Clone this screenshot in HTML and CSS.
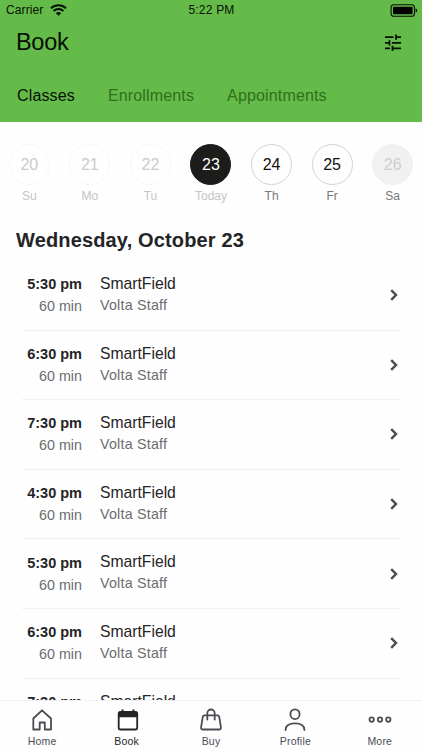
FILE: index.html
```html
<!DOCTYPE html>
<html lang="en">
<head>
<meta charset="utf-8">
<meta name="viewport" content="width=device-width, initial-scale=1">
<title>Book</title>
<link rel="stylesheet" href="styles.css">
</head>
<body>
<div class="app">
    <header class="header">
        <div class="status-bar">
            <div class="carrier">
                <span>Carrier</span>
                <svg class="wifi" viewBox="0 0 17 12" width="17" height="12">
                    <path d="M1 4.3a10.8 10.8 0 0 1 15 0M3.6 7a7 7 0 0 1 9.8 0" fill="none" stroke="#061004" stroke-width="1.9"/>
                    <path d="M8.5 11.8L5.9 9.2a3.8 3.8 0 0 1 5.2 0z" fill="#061004"/>
                </svg>
            </div>
            <span class="clock">5:22 PM</span>
            <svg class="battery" viewBox="0 0 28 13" width="28" height="13">
                <rect x="1.1" y=".8" width="23.4" height="11.4" rx="2.8" fill="none" stroke="#061004" stroke-width="1.1"/>
                <rect x="3" y="2.7" width="19.6" height="7.6" rx=".8" fill="#000"/>
                <path d="M25.6 4.5c1.2.3 1.6 1.1 1.6 2s-.4 1.7-1.6 2z" fill="#061004"/>
            </svg>
        </div>
        <div class="title-bar">
            <h1>Book</h1>
            <svg class="filter" viewBox="0 0 18 18" width="18" height="18">
                <path d="M1 3.2h8.5M12 3.2h5M12 .6v5.2M1 8.8h4.5M8 8.8h9M5.5 6.2v5.2M1 14.3h5M8.5 14.3H17M8.5 11.7v5.2" fill="none" stroke="#061004" stroke-width="1.8"/>
            </svg>
        </div>
        <nav class="tabs">
            <a class="tab active">Classes</a>
            <a class="tab">Enrollments</a>
            <a class="tab">Appointments</a>
        </nav>
    </header>

    <section class="week">
        <div class="day past"><span class="num">20</span><span class="name">Su</span></div>
        <div class="day past"><span class="num">21</span><span class="name">Mo</span></div>
        <div class="day past"><span class="num">22</span><span class="name">Tu</span></div>
        <div class="day today"><span class="num">23</span><span class="name">Today</span></div>
        <div class="day"><span class="num">24</span><span class="name">Th</span></div>
        <div class="day"><span class="num">25</span><span class="name">Fr</span></div>
        <div class="day closed"><span class="num">26</span><span class="name">Sa</span></div>
    </section>

    <main class="schedule">
        <h2>Wednesday, October 23</h2>
        <div class="class-list">
            <div class="class-row">
                <div class="time"><b>5:30 pm</b><span>60 min</span></div>
                <div class="info"><p>SmartField</p><span>Volta Staff</span></div>
                <svg class="arrow" viewBox="0 0 8 12" width="8" height="12"><path d="M1.2 1.2L6 6l-4.8 4.8"/></svg>
            </div>
            <div class="class-row">
                <div class="time"><b>6:30 pm</b><span>60 min</span></div>
                <div class="info"><p>SmartField</p><span>Volta Staff</span></div>
                <svg class="arrow" viewBox="0 0 8 12" width="8" height="12"><path d="M1.2 1.2L6 6l-4.8 4.8"/></svg>
            </div>
            <div class="class-row">
                <div class="time"><b>7:30 pm</b><span>60 min</span></div>
                <div class="info"><p>SmartField</p><span>Volta Staff</span></div>
                <svg class="arrow" viewBox="0 0 8 12" width="8" height="12"><path d="M1.2 1.2L6 6l-4.8 4.8"/></svg>
            </div>
            <div class="class-row">
                <div class="time"><b>4:30 pm</b><span>60 min</span></div>
                <div class="info"><p>SmartField</p><span>Volta Staff</span></div>
                <svg class="arrow" viewBox="0 0 8 12" width="8" height="12"><path d="M1.2 1.2L6 6l-4.8 4.8"/></svg>
            </div>
            <div class="class-row">
                <div class="time"><b>5:30 pm</b><span>60 min</span></div>
                <div class="info"><p>SmartField</p><span>Volta Staff</span></div>
                <svg class="arrow" viewBox="0 0 8 12" width="8" height="12"><path d="M1.2 1.2L6 6l-4.8 4.8"/></svg>
            </div>
            <div class="class-row">
                <div class="time"><b>6:30 pm</b><span>60 min</span></div>
                <div class="info"><p>SmartField</p><span>Volta Staff</span></div>
                <svg class="arrow" viewBox="0 0 8 12" width="8" height="12"><path d="M1.2 1.2L6 6l-4.8 4.8"/></svg>
            </div>
            <div class="class-row">
                <div class="time"><b>7:30 pm</b><span>60 min</span></div>
                <div class="info"><p>SmartField</p><span>Volta Staff</span></div>
                <svg class="arrow" viewBox="0 0 8 12" width="8" height="12"><path d="M1.2 1.2L6 6l-4.8 4.8"/></svg>
            </div>
        </div>
    </main>

    <nav class="bottom-nav">
        <a class="nav-item">
            <svg viewBox="0 0 24 24" width="24" height="24"><path d="M3.3 10.5L12 2.3l9 8.2V21.5H14.8V14.5H9.7V21.5H3.3z"/></svg>
            <span>Home</span>
        </a>
        <a class="nav-item active">
            <svg viewBox="0 0 24 24" width="24" height="24">
                <rect x="3.7" y="3.8" width="18.5" height="17.7" rx="1.8"/>
                <path class="solid" d="M3.7 3.8h18.5v5.4H3.7zM6.6 1.5h2v3h-2zM17.4 1.5h2v3h-2z"/>
            </svg>
            <span>Book</span>
        </a>
        <a class="nav-item">
            <svg viewBox="0 0 24 24" width="24" height="24"><path d="M5.5 7.3h13q1.5 0 1.7 1.5l1.7 10.4q.3 2.3-2 2.3H4.1q-2.3 0-2-2.3L3.8 8.8q.2-1.5 1.7-1.5zM8.3 11.5V5.2a3.7 3.7 0 0 1 7.4 0V11.5"/></svg>
            <span>Buy</span>
        </a>
        <a class="nav-item">
            <svg viewBox="0 0 24 24" width="24" height="24"><ellipse cx="12" cy="6.2" rx="4.6" ry="4.9"/><path d="M2.6 22c0-4.2 3.5-6.6 9.4-6.6s9.4 2.4 9.4 6.6"/></svg>
            <span>Profile</span>
        </a>
        <a class="nav-item">
            <svg class="dots" viewBox="0 0 24 24" width="24" height="24"><circle cx="3.7" cy="11.6" r="2.2"/><circle cx="12" cy="11.6" r="2.2"/><circle cx="20.3" cy="11.6" r="2.2"/></svg>
            <span>More</span>
        </a>
    </nav>
</div>
</body>
</html>
```
FILE: styles.css
```css
* {
    box-sizing: border-box;
}

body {
    margin: 0;
    background: #fefefe;
    color: #242426;
    font-family: "Liberation Sans", Arial, sans-serif;
}

h1, h2, p {
    margin: 0;
}

.app {
    display: flex;
    flex-direction: column;
    height: 750px;
    overflow: hidden;
}

/* Header */
.header {
    flex: none;
    height: 122px;
    background: #65bb49;
    color: #061004;
}

.status-bar {
    display: grid;
    grid-template-columns: 1fr auto 1fr;
    align-items: center;
    height: 20px;
    padding: 0 4px 0 6px;
    font-size: 12px;
}

.carrier {
    display: flex;
    align-items: center;
    gap: 7px;
}

.carrier span {
    letter-spacing: 0.1px;
}

.clock {
    margin-right: 1px;
    letter-spacing: 0.2px;
}

.battery {
    justify-self: end;
}

.title-bar {
    display: flex;
    justify-content: space-between;
    align-items: center;
    height: 45px;
    padding: 0 20px 0 16px;
}

h1 {
    font-size: 23.5px;
    font-weight: normal;
    letter-spacing: -0.3px;
}

.tabs {
    display: flex;
    gap: 33px;
    padding: 21px 16px 0 17px;
    font-size: 16px;
    line-height: 20px;
    letter-spacing: 0.15px;
}

.tab {
    color: #2f7019;
}

.tab.active {
    color: #061004;
}

/* Week strip */
.week {
    flex: none;
    display: grid;
    grid-template-columns: repeat(7, 1fr);
    height: 97px;
    margin: 0 -1px;
    padding-top: 22px;
}

.day {
    display: flex;
    flex-direction: column;
    align-items: center;
}

.num {
    width: 41px;
    height: 41px;
    border: 1px solid #d4d4d4;
    border-radius: 50%;
    color: #111;
    font-size: 16px;
    line-height: 40px;
    text-align: center;
}

.name {
    margin-top: 3px;
    color: #77777a;
    font-size: 12px;
    line-height: 16px;
}

.past .num {
    border-color: #f7f7f7;
    color: #cbcbcb;
}

.past .name,
.today .name {
    color: #c5c5c5;
}

.today .num {
    border-color: #1c1c1a;
    background: #1c1c1a;
    color: #fff;
}

.closed .num {
    border-color: #f1f1f1;
    background: #f1f1f1;
    color: #cecece;
}

/* Schedule */
.schedule {
    flex: 1;
    min-height: 0;
    overflow: hidden;
}

h2 {
    padding-left: 16px;
    font-size: 20px;
    line-height: 42px;
    letter-spacing: 0.15px;
}

.class-list {
    padding: 0 22px;
}

.class-row {
    display: flex;
    align-items: center;
    height: 69.6px;
    padding-right: 2px;
    border-bottom: 1px solid #f1f1f1;
}

.time {
    width: 60px;
    text-align: right;
}

.time b,
.time span,
.info p,
.info span {
    display: block;
    line-height: 22px;
}

.time b {
    font-size: 14.5px;
}

.time span,
.info span {
    color: #6c6c71;
    font-size: 14.3px;
}

.info {
    flex: 1;
    padding: 0 0 1.5px 18px;
}

.info p {
    font-size: 15.7px;
}

.info span {
    line-height: 21px;
    letter-spacing: 0.2px;
}

.arrow {
    fill: none;
    stroke: #4a4a4c;
    stroke-width: 2.4;
}

/* Bottom navigation */
.bottom-nav {
    flex: none;
    display: grid;
    grid-template-columns: repeat(5, 1fr);
    height: 50px;
    border-top: 1px solid #f1f1f1;
    background: #fefefe;
}

.nav-item {
    display: flex;
    flex-direction: column;
    align-items: center;
    padding-top: 7px;
    color: #4c4c54;
    font-size: 10.5px;
    line-height: 18px;
    letter-spacing: 0.2px;
}

.nav-item svg {
    fill: none;
    stroke: currentColor;
    stroke-width: 1.8;
    stroke-linejoin: round;
    stroke-linecap: round;
}

.nav-item .solid {
    fill: currentColor;
    stroke: none;
}

.nav-item.active {
    color: #242426;
}
```
